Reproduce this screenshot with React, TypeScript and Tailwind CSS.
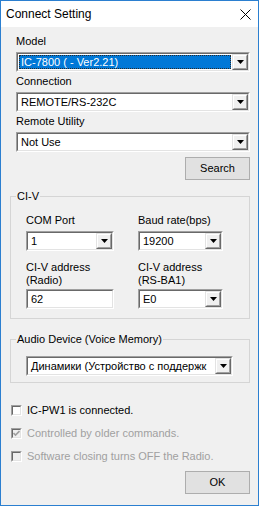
import React from "react";

const DropBtn = () => (
  <div className="w-[16px] h-full shrink-0 border border-t-[#e3e3e3] border-l-[#e3e3e3] border-r-[#696969] border-b-[#696969]">
    <div className="w-full h-full bg-[#f0f0f0] border border-t-white border-l-white border-r-[#a0a0a0] border-b-[#a0a0a0] flex items-center justify-center">
      <svg width="7" height="4" viewBox="0 0 7 4">
        <polygon points="0,0 7,0 3.5,4" fill="#000" />
      </svg>
    </div>
  </div>
);

const Sunken = ({ className, children, bg }: { className: string; children: React.ReactNode; bg: string }) => (
  <div className={`border border-t-[#a0a0a0] border-l-[#a0a0a0] border-r-white border-b-white ${className}`}>
    <div className={`h-full flex border border-t-[#696969] border-l-[#696969] border-r-[#e3e3e3] border-b-[#e3e3e3] ${bg}`}>
      {children}
    </div>
  </div>
);

const Combo = ({ text, width, selected }: { text: string; width: string; selected?: boolean }) => (
  <Sunken className={`h-[20px] ${width}`} bg="bg-white">
    <div className="flex-1 min-w-0 p-[1px] flex">
      <div
        className={`flex-1 min-w-0 flex items-center whitespace-nowrap overflow-hidden ${
          selected ? "pl-[1px] bg-[#0078d7] text-white border border-dotted border-[#2a2a2a]" : "pl-[2px]"
        }`}
      >
        {text}
      </div>
    </div>
    <DropBtn />
  </Sunken>
);

const CheckBox = ({ checked, disabled, label }: { checked?: boolean; disabled?: boolean; label: string }) => (
  <div className="flex items-center h-[13px] pl-[10px]">
    <div className="w-[11px] h-[11px] border border-t-[#a0a0a0] border-l-[#a0a0a0] border-r-white border-b-white">
      <div
        className={`w-full h-full border border-t-[#696969] border-l-[#696969] border-r-[#e3e3e3] border-b-[#e3e3e3] flex items-center justify-center ${
          disabled ? "bg-[#f0f0f0]" : "bg-white"
        }`}
      >
        {checked && (
          <svg width="7" height="7" viewBox="0 0 7 7">
            <path d="M0.5 3 L2.5 5 L6.5 1" stroke="#a0a0a0" strokeWidth="1.6" fill="none" />
          </svg>
        )}
      </div>
    </div>
    <span className={`ml-[5px] ${disabled ? "text-[#a0a0a0]" : "text-black"}`}>{label}</span>
  </div>
);

const Button = ({ label }: { label: string }) => (
  <div className="self-end w-[65px] h-[23px] border border-[#adadad] bg-[#e1e1e1] flex items-center justify-center text-black">
    {label}
  </div>
);

export default function App() {
  return (
    <div className="w-[259px] h-[506px] bg-[#f0f0f0] border border-[#2b7fd0] flex flex-col font-['Liberation_Sans',Arial,sans-serif] text-[11px] leading-[13px] text-black overflow-hidden">
      <div className="h-[26px] shrink-0 bg-white flex items-center justify-between pl-[5px] pr-[7px]">
        <span className="text-[12px] leading-[14px]">Connect Setting</span>
        <svg width="11" height="11" viewBox="0 0 11 11">
          <path d="M0.5 0.5 L10.5 10.5 M10.5 0.5 L0.5 10.5" stroke="#000" strokeWidth="1" />
        </svg>
      </div>
      <div className="flex-1 flex flex-col pl-[15px] pr-[8px]">
        <div className="mt-[8px] h-[13px]">Model</div>
        <div className="mt-[4px]">
          <Combo text="IC-7800 ( - Ver2.21)" width="w-full" selected />
        </div>
        <div className="mt-[3px] h-[13px]">Connection</div>
        <div className="mt-[4px]">
          <Combo text="REMOTE/RS-232C" width="w-full" />
        </div>
        <div className="mt-[3px] h-[13px]">Remote Utility</div>
        <div className="mt-[4px]">
          <Combo text="Not Use" width="w-full" />
        </div>
        <div className="mt-[5px] flex flex-col">
          <Button label="Search" />
        </div>

        <fieldset className="mt-[10px] -ml-[6px] border border-[#d5d5d5] pl-[15px] pb-[9px]">
          <legend className="-ml-[10px] px-[1px] h-[13px]">CI-V</legend>
          <div className="pt-[11px] flex gap-[24px]">
            <div className="w-[88px] flex flex-col">
              <div className="h-[13px]">COM Port</div>
              <div className="mt-[4px]">
                <Combo text="1" width="w-[88px]" />
              </div>
              <div className="mt-[10px] h-[26px]">
                CI-V address
                <br />
                (Radio)
              </div>
              <div className="mt-[2px]">
                <Sunken className="h-[20px] w-[88px]" bg="bg-white">
                  <div className="flex items-center pl-[3px]">62</div>
                </Sunken>
              </div>
            </div>
            <div className="w-[85px] flex flex-col">
              <div className="h-[13px]">Baud rate(bps)</div>
              <div className="mt-[4px]">
                <Combo text="19200" width="w-[85px]" />
              </div>
              <div className="mt-[10px] h-[26px]">
                CI-V address
                <br />
                (RS-BA1)
              </div>
              <div className="mt-[2px]">
                <Combo text="E0" width="w-[85px]" />
              </div>
            </div>
          </div>
        </fieldset>

        <fieldset className="mt-[14px] -ml-[6px] border border-[#d5d5d5] pl-[15px] pb-[6px]">
          <legend className="-ml-[10px] px-[1px] h-[13px]">Audio Device (Voice Memory)</legend>
          <div className="pt-[10px]">
            <Combo text="Динамики (Устройство с поддержк" width="w-[207px]" />
          </div>
        </fieldset>

        <div className="-ml-[15px] mt-[21px] flex flex-col gap-[10px]">
          <CheckBox label="IC-PW1 is connected." />
          <CheckBox label="Controlled by older commands." checked disabled />
          <CheckBox label="Software closing turns OFF the Radio." disabled />
        </div>

        <div className="mt-[8px] flex flex-col">
          <Button label="OK" />
        </div>
      </div>
    </div>
  );
}
